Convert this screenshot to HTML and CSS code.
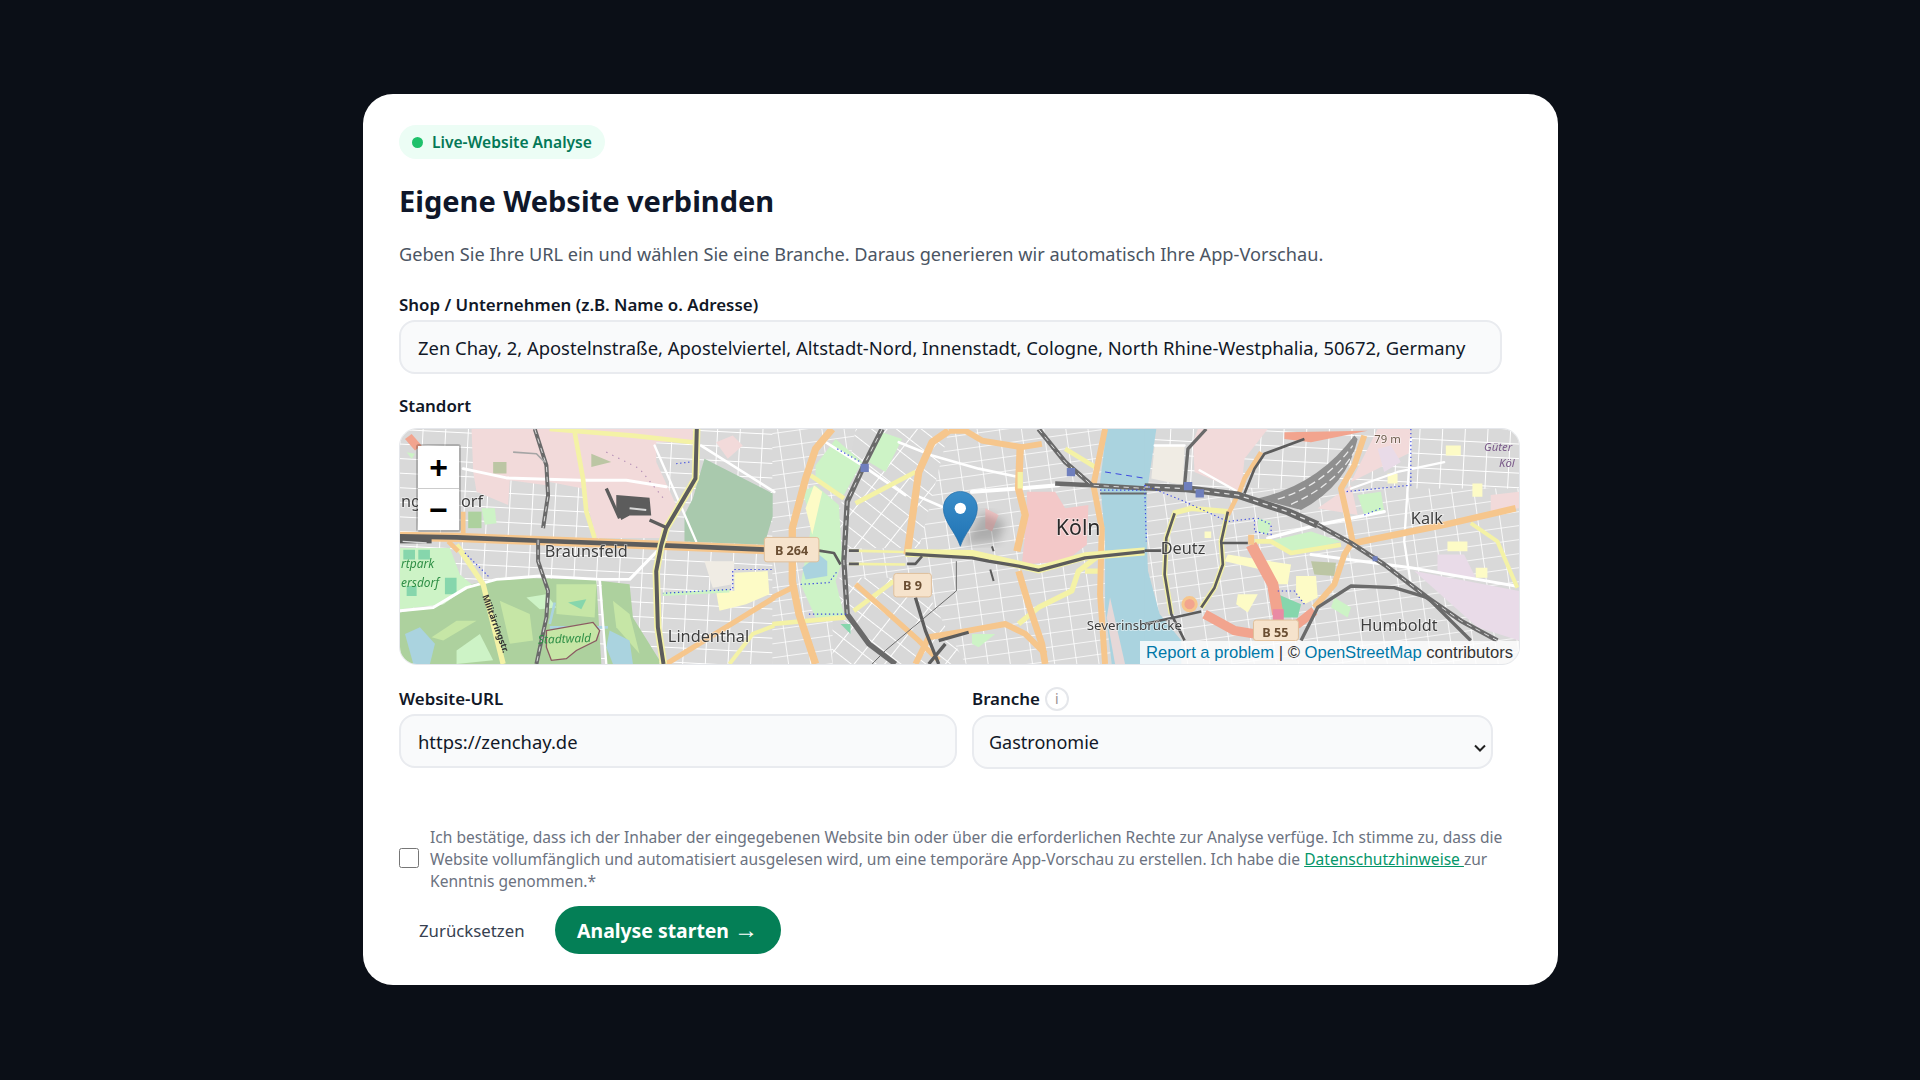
FILE: index.html
```html
<!DOCTYPE html>
<html lang="de">
<head>
  <meta charset="UTF-8" />
  <meta name="viewport" content="width=device-width, initial-scale=1.0" />
  <title>Eigene Website verbinden</title>
  <link rel="stylesheet" href="styles.css">
</head>
<body>
  <div class="card">
    <div class="badge"><span class="dot"></span>Live-Website Analyse</div>
    <h1>Eigene Website verbinden</h1>
    <p class="intro">Geben Sie Ihre URL ein und wählen Sie eine Branche. Daraus generieren wir automatisch Ihre App-Vorschau.</p>

    <label class="label">Shop / Unternehmen (z.B. Name o. Adresse)</label>
    <input class="field field-shop" type="text" value="Zen Chay, 2, Apostelnstraße, Apostelviertel, Altstadt-Nord, Innenstadt, Cologne, North Rhine-Westphalia, 50672, Germany" />

    <label class="label label-map">Standort</label>
    <div class="map">
      <!-- map is drawn at 3x, 3363 x 711 units -->
      <svg class="map-svg" viewBox="0 0 3363 711" preserveAspectRatio="none">
        <defs>
          <pattern id="grid-a" width="68" height="44" patternUnits="userSpaceOnUse" patternTransform="rotate(3)">
            <rect width="68" height="44" fill="#d9d9d9" />
            <path d="M0 0H68M0 0V44" stroke="#fff" stroke-width="6" />
          </pattern>
          <pattern id="grid-b" width="72" height="46" patternUnits="userSpaceOnUse" patternTransform="rotate(38)">
            <rect width="72" height="46" fill="#d8d8d8" />
            <path d="M0 0H72M0 0V46" stroke="#fff" stroke-width="6" />
          </pattern>
          <pattern id="grid-c" width="66" height="42" patternUnits="userSpaceOnUse" patternTransform="rotate(-8)">
            <rect width="66" height="42" fill="#d9d9d9" />
            <path d="M0 0H66M0 0V42" stroke="#fff" stroke-width="5" />
          </pattern>
          <linearGradient id="pin-fill" x1="0" y1="0" x2="0" y2="1">
            <stop offset="0" stop-color="#3a8dc9" />
            <stop offset="1" stop-color="#1f72b3" />
          </linearGradient>
          <filter id="pin-blur"><feGaussianBlur stdDeviation="14" /></filter>
        </defs>

        <rect width="3363" height="711" fill="url(#grid-a)" />
        <rect x="1119" width="1119" height="711" fill="url(#grid-c)" />
        <path d="M1370 0H1650L1560 360H1300Z" fill="url(#grid-b)" />
        <path d="M1300 450H1560L1700 711H1300Z" fill="url(#grid-b)" />
        <rect x="2238" y="180" width="1125" height="531" fill="url(#grid-c)" />

        <!-- left part -->
        <g>
          <path class="pink" d="M215 0H880V40H770V100L830 230L780 330H590L550 180L450 160L440 170L330 155L325 230L230 190L220 130Z" />
          <path class="pink" d="M950 40L1000 20L1030 50L985 90Z" />
          <path class="cemetery" d="M915 90L1120 195V265L1095 350L855 340V260L880 210Z" />
          <path class="forest" d="M0 555L130 530L215 470L300 450L590 455L605 711H0Z" />
          <path class="forest" d="M605 460L690 470L700 570L780 700V711H620Z" />
          <path class="meadow" d="M95 630L170 580L230 580L130 640Z" />
          <path class="meadow" d="M300 520L390 560L400 640L330 650Z" />
          <path class="meadow" d="M470 470L590 470L585 570L470 560Z" />
          <path class="meadow" d="M640 520L690 560L720 680L650 600Z" />
          <path class="park" d="M380 510L440 500L470 540L420 545Z" />
          <path class="park" d="M170 670L240 620L280 700L170 711Z" />
          <path class="park" d="M0 360H150L180 440L215 470L130 530L0 545Z" />
          <path class="teal" d="M10 365H45V395H10ZM55 365H90V395H55ZM20 475H50V505H20ZM135 450H170V500H135ZM505 525L560 515L545 545Z" />
          <path class="water" d="M15 620L60 600L105 650L90 711H40Z" />
          <path class="water" d="M630 610L690 640L700 711H640L620 660Z" />
          <path class="river-thin" d="M450 590L465 525M450 600H625" />
          <path class="ring-wood" d="M440 610L580 585L600 610L590 640L530 670L500 695L455 700L440 660Z" />
          <path class="park" d="M245 240H285L290 285L255 290Z" />
          <path class="forest" d="M205 250H245V300H205Z" />
          <path class="olive" d="M280 100H320V135H280ZM575 75L635 100L575 115Z" />
          <path class="salmon-fill" d="M15 30L35 15L65 50L45 65Z" />
          <path class="park" d="M20 70L45 75L35 90Z" />
          <path class="beige" d="M915 400H1005L1000 470L940 480Z" />
          <path class="sand" d="M1005 435L1105 430L1110 500L1040 530L1005 510Z" />
          <path class="sand" d="M950 490H1010L1040 530L960 550Z" />
          <path class="park" d="M790 495L990 485V495L790 505Z" />

          <path class="white" stroke-width="9" d="M190 120L320 148L540 155L680 155L800 175" />
          <path class="white" stroke-width="9" d="M0 550L100 540L200 480L290 455L420 445L600 455L690 455L780 362" />
          <path class="white" stroke-width="7" d="M600 455L620 711M765 50L800 130L890 340" />
          <path class="white" stroke-width="8" d="M905 50L1125 190" />

          <path class="yellow" stroke-width="14" d="M525 10L550 150L560 250L585 330M450 0L700 20L880 40" />
          <path class="yellow" stroke-width="16" d="M170 350L250 470L310 711" />
          <path class="yellow" stroke-width="12" d="M990 711L1060 620L1125 595" />
          <path class="orange" stroke-width="14" d="M190 250V330M145 340L175 370" />
          <path class="orange" stroke-width="16" d="M800 711L1125 510" />

          <path class="orange" stroke-width="28" d="M0 325L170 328L420 338L790 352L1100 365" />
          <path class="dark" stroke-width="14" d="M0 325L170 328L420 338L790 352L1100 365" />
          <path class="dark" stroke-width="20" d="M0 336H95" />
          <path class="dark-white" stroke-width="4" d="M8 340L80 345" />
          <path class="yellow" stroke-width="22" d="M892 0L888 150L800 300L785 352L770 430L775 600L792 711" />
          <path class="dark" stroke-width="12" d="M892 0L888 150L800 300L785 352L770 430L775 600L792 711" />

          <path class="rail" stroke-width="12" d="M405 0L440 110L445 200L430 300M415 335V400L445 490L440 570L410 711" />
          <path class="rail-dash" stroke-width="3" d="M405 0L440 110L445 200L430 300M415 335V400L445 490L440 570L410 711" />
          <path class="rail-light" stroke-width="5" d="M340 70L410 75L435 100" />
          <path class="dark" stroke-width="10" d="M620 180L660 270M750 275L800 298" />
          <path class="dark-fill" d="M650 200L750 208L755 262L690 262L665 275L650 240Z" />
          <path class="dark-white" stroke-width="6" d="M690 240L740 245" />

          <path class="dots" d="M195 375L270 450M830 105L870 100M1005 425H1125M1000 430V485L790 497" />
          <path class="dots-purple" d="M620 70L720 120L800 220" />
        </g>

        <!-- middle part -->
        <g transform="translate(1119 0)">
          <path class="park" d="M130 110L190 30L270 100L215 200L130 150Z" />
          <path class="park" d="M330 10L390 30L340 130L290 100Z" />
          <path class="park" d="M90 190L130 170L200 230L210 400L190 460L210 540L220 570H130L85 470L120 280Z" />
          <path class="sand" d="M100 240L125 170L150 190L120 320Z" />
          <path class="pink-city" d="M765 190H850L880 240L950 230L945 350L880 400L750 410L765 260Z" />
          <path class="pink-city" d="M640 240L680 260L660 310L640 300Z" />
          <path class="teal" d="M205 590H235V620Z" />
          <path class="park" d="M600 620H670L620 660L600 650Z" />
          <path class="water" d="M90 420L140 380L165 400V445L100 455Z" />
          <path class="water" d="M1005 0L985 160L1000 330V540L1020 711H1125V0Z" />
          <path class="bank" d="M1015 510L1060 711H1030L1005 570Z" />

          <path class="white" stroke-width="12" d="M600 190L740 180L860 170" />
          <path class="white" stroke-width="8" d="M430 200L510 235M380 40L480 80L620 120L740 145M160 40L270 110L400 200" />

          <path class="yellow" stroke-width="14" d="M115 140L215 210M250 225L430 130M245 550L365 460M0 590L220 570M880 60L970 115" />
          <path class="yellow" stroke-width="16" d="M740 590L800 540L900 490L920 430L985 380M940 430H980" />
          <path class="yellow" stroke-width="8" d="M230 368L400 372M230 408L400 410" />

          <path class="orange" stroke-width="22" d="M180 0L130 60L100 150L60 300V460L80 560L130 711" />
          <path class="orange" stroke-width="16" d="M0 510L60 480M250 470L340 550L440 640L500 700" />
          <path class="orange" stroke-width="22" d="M530 5L480 40L440 130L405 380M745 55L740 180L760 260L735 370" />
          <path class="orange" stroke-width="18" d="M530 5H580L630 35L750 55L810 45M470 630L590 610L700 590L760 620L820 680M430 711L470 630" />
          <path class="orange" stroke-width="20" d="M740 430L770 530L810 650L820 711" />
          <path class="orange" stroke-width="18" d="M1000 0L965 170L990 300L985 500L1000 711" />
          <path class="yellow" stroke-width="16" d="M745 130V180" />

          <path class="yellow" stroke-width="24" d="M400 375L600 378L740 410L800 425L940 385L1125 370" />
          <path class="dark" stroke-width="10" d="M400 378L600 390L650 400L740 415L800 428L940 390L1125 370" />
          <path class="dark" stroke-width="8" d="M140 368L185 375L205 410M230 368H260M230 408H260M405 408H430L450 385" />

          <path class="rail" stroke-width="16" d="M330 0L280 100L225 220L215 400L225 560L290 650L370 711" />
          <path class="rail-dash" stroke-width="3" d="M330 0L280 100L225 220L215 400L225 560" />
          <path class="dark" stroke-width="10" d="M430 510L460 610L500 711M500 640L590 615M470 711L520 650" />
          <path class="rail-thin" d="M553 400V490L340 670L300 711" />
          <path class="dark" stroke-width="6" d="M660 355L665 370M655 425L665 460" />
          <path class="rail" stroke-width="14" d="M800 0L880 100L960 170L1125 180M850 165L960 170" />
          <path class="rail-dash" stroke-width="3" d="M800 0L880 100L960 170L1125 180" />
          <path class="rail" stroke-width="6" d="M985 195H1125" />

          <path class="dots" d="M985 185H1125M195 60L265 100M85 470L170 465L195 430M110 560H225" />
          <path class="dash" d="M1000 130L1125 150" />

          <path class="station" d="M265 105H290V130H265ZM885 118H910V143H885Z" />

          <rect class="shield" x="-24" y="328" width="164" height="74" rx="8" />
          <rect class="shield" x="365" y="437" width="113" height="71" rx="8" />
        </g>

        <!-- right part -->
        <g transform="translate(2238 0)">
          <path class="water" d="M0 0H35L10 170L0 195L10 430L45 560L110 640V711H0Z" />
          <path class="beige" d="M30 50H120L115 170L20 150Z" />
          <path class="pink" d="M145 40L160 0H370L300 90L290 190L150 130Z" />
          <path class="pink" d="M650 100L700 0H800V70L620 160Z" />
          <path class="pink" d="M520 240L620 170L640 260Z" />
          <path class="pink" d="M1040 200L1125 190V240L1040 250Z" />
          <path class="lilac" d="M700 60L740 50L770 100L720 130Z" />
          <path class="lilac" d="M810 430L1125 490V640L1000 600Z" />
          <path class="lilac" d="M880 380H960L1000 460L880 430Z" />
          <path class="park" d="M370 340L500 310L590 340L440 380Z" />
          <path class="park" d="M640 200L710 190L720 250L660 260Z" />
          <path class="park" d="M340 270L380 280L370 320L340 310Z" />
          <path class="park" d="M570 510L620 540L610 570L560 540Z" />
          <path class="teal" d="M400 500L470 530L460 570L410 570Z" />
          <path class="olive" d="M500 400L575 405L570 445L510 440Z" />
          <path class="sand" d="M250 380L440 410L430 470H390L370 430L240 400Z" />
          <path class="sand" d="M455 445H515L520 510L480 530L455 500Z" />
          <path class="sand" d="M280 500H340L310 555L275 530Z" />
          <path class="sand" d="M905 50H950V80H905ZM985 165H1015V205H985ZM910 340H970V370H910ZM730 135H760V165H730ZM995 420H1030V450H995ZM180 310H200V330H180Z" />

          <path class="white" stroke-width="10" d="M370 330L520 290L720 250" />
          <path class="white" stroke-width="9" d="M500 380L800 420L1000 455L1115 475" />
          <path class="white" stroke-width="7" d="M800 30L780 340L800 470M620 180L760 130L900 100M30 50L120 50M165 125L280 190" />

          <path class="yellow" stroke-width="12" d="M980 285L1060 340L1120 480" />
          <path class="yellow" stroke-width="14" d="M330 340H380L440 375L590 350" />
          <path class="yellow" stroke-width="16" d="M85 255L140 240L250 250M90 255L65 330L60 440L80 560M250 250L230 340L235 410L210 480L170 540" />

          <path class="salmon" stroke-width="34" d="M320 350L385 470L400 560" />
          <path class="salmon" stroke-width="28" d="M180 560L270 610L330 620L460 590L510 550" />
          <path class="salmon-fill" d="M420 10L670 5L500 40L420 30Z" />
          <path class="rose" d="M385 545H418V578H385Z" />
          <circle class="ring" cx="135" cy="530" r="20" />

          <path class="orange" stroke-width="18" d="M660 20L630 110L590 180L610 270L625 340L600 380L570 470L510 540" />
          <path class="orange" stroke-width="20" d="M630 345L900 290L1115 240" />
          <path class="orange" stroke-width="14" d="M350 70L300 150L285 190L250 260" />
          <path class="orange" stroke-width="18" d="M320 320V350" />

          <path class="dark" stroke-width="8" d="M480 30L360 75L330 120L300 195" />
          <path class="dark" stroke-width="8" d="M250 250L230 340L235 410L210 480L170 540" />
          <path class="dark" stroke-width="8" d="M90 255L65 330L60 440L80 560L120 640" />
          <path class="dark" stroke-width="8" d="M0 368H50M230 345H310M0 590L170 552" />

          <path class="rail-yard" d="M340 210Q520 170 630 20L640 30Q610 170 470 245Z" />
          <path class="rail-dash-wide" d="M400 212Q540 170 625 50M440 228Q570 170 630 70" />
          <path class="rail" stroke-width="10" d="M185 0L130 60L120 170" />
          <path class="rail" stroke-width="22" d="M0 175L120 180L280 200L430 250L520 290" />
          <path class="rail-dash" stroke-width="4" d="M0 175L120 180L280 200L430 250L520 290" />
          <path class="rail" stroke-width="14" d="M520 290L620 345L720 410L850 510L950 580L1060 640" />
          <path class="rail-dash" stroke-width="3" d="M520 290L620 345L720 410L850 510L950 580L1060 640" />
          <path class="rail" stroke-width="10" d="M470 640L520 540L620 475L750 480L850 510L980 640" />

          <path class="dots" d="M0 170L110 215L250 280L330 270V310L380 320V290L340 270M800 0V170L600 190M660 260L710 240M0 170L5 340M400 490H450L480 530" />
          <path class="station" d="M118 160H143V185H118ZM153 182H178V207H153ZM685 385H700V400H685Z" />

          <rect class="shield" x="327" y="578" width="135" height="62" rx="8" />
        </g>

        <!-- labels -->
        <g class="shield-text">
          <text x="1177" y="380">B 264</text>
          <text x="1540" y="488">B 9</text>
          <text x="2631" y="628">B 55</text>
        </g>
        <g class="place">
          <text x="3" y="236">ng</text>
          <text x="183" y="236">orf</text>
          <text x="435" y="388">Braunsfeld</text>
          <text x="805" y="645">Lindenthal</text>
          <text class="place-big" x="1971" y="322">Köln</text>
          <text x="2286" y="378">Deutz</text>
          <text x="3038" y="288">Kalk</text>
          <text x="2886" y="610">Humboldt</text>
          <text class="place-small" x="2064" y="608">Severinsbrücke</text>
          <text class="place-height" x="2928" y="42">79 m</text>
        </g>
        <g class="place-green">
          <text x="3" y="420">rtpark</text>
          <text x="3" y="478">ersdorf</text>
          <text x="415" y="650" transform="rotate(-2 415 650)">Stadtwald</text>
        </g>
        <text class="road-name" x="247" y="505" transform="rotate(70 247 505)">Militärringstr.</text>
        <g class="place-purple">
          <text x="3258" y="68">Güter</text>
          <text x="3303" y="115">Köl</text>
        </g>

        <!-- marker -->
        <g transform="translate(1119 0)">
          <path class="pin-shadow" d="M575 350L630 250L700 280L680 340Z" filter="url(#pin-blur)" />
          <path class="pin" d="M565 355C550 310 514 280 514 240A51 51 0 1 1 616 240C616 280 580 310 565 355Z" fill="url(#pin-fill)" />
          <circle cx="565" cy="240" r="17" fill="#fff" />
        </g>
      </svg>

      <div class="zoom-control">
        <div class="zoom-btn">+</div>
        <div class="zoom-btn">−</div>
      </div>
      <div class="attribution"><a href="#">Report a problem</a> | © <a href="#">OpenStreetMap</a> contributors</div>
    </div>

    <div class="row">
      <div class="col col-url">
        <label class="label">Website-URL</label>
        <input class="field" type="text" value="https://zenchay.de" />
      </div>
      <div class="col col-branch">
        <div class="label-line">
          <label class="label">Branche</label>
          <span class="info">i</span>
        </div>
        <div class="select-wrap">
          <select class="field field-select">
            <option>Gastronomie</option>
          </select>
          <svg class="chevron" width="12" height="8" viewBox="0 0 12 8">
            <path d="M1 1.5L6 6.5L11 1.5" fill="none" stroke="#222" stroke-width="2" />
          </svg>
        </div>
      </div>
    </div>

    <div class="consent">
      <input class="check" type="checkbox" />
      <p>Ich bestätige, dass ich der Inhaber der eingegebenen Website bin oder über die erforderlichen Rechte zur Analyse verfüge. Ich stimme zu, dass die Website vollumfänglich und automatisiert ausgelesen wird, um eine temporäre App-Vorschau zu erstellen. Ich habe die <a href="#">Datenschutzhinweise </a>zur Kenntnis genommen.*</p>
    </div>

    <div class="actions">
      <button class="btn-reset">Zurücksetzen</button>
      <button class="btn-start">Analyse starten <span class="arrow">→</span></button>
    </div>
  </div>
</body>
</html>
```

FILE: styles.css
```css
* {
  box-sizing: border-box;
  margin: 0;
  padding: 0;
  font-family: "Noto Sans", "Open Sans", sans-serif;
}

body {
  min-height: 100vh;
  padding: 0 0 1px 1px;
  background: #0b0f17;
  display: flex;
  justify-content: center;
  align-items: center;
}

.card {
  width: 1195px;
  height: 891px;
  background: #fff;
  border-radius: 30px;
  padding: 31px 38px 0 36px;
}

.badge {
  display: inline-flex;
  align-items: center;
  height: 34px;
  padding: 0 13px;
  gap: 9px;
  background: #ecfdf5;
  border-radius: 17px;
  color: #047857;
  font-size: 15.6px;
  font-weight: 600;
}

.dot {
  width: 11px;
  height: 11px;
  border-radius: 50%;
  background: #1fc16b;
}

h1 {
  margin-top: 22px;
  font-size: 29px;
  line-height: 40px;
  font-weight: 700;
  color: #0f172a;
}

.intro {
  margin-top: 20px;
  font-size: 18.16px;
  line-height: 26px;
  color: #4b5563;
}

.label {
  display: block;
  font-size: 16.9px;
  line-height: 22px;
  font-weight: 600;
  color: #111827;
}

.intro + .label {
  margin-top: 27px;
}

.field {
  display: block;
  height: 54px;
  width: 100%;
  margin-top: 4px;
  padding: 0 17px;
  background: #f9fafb;
  border: 2px solid #e9ebef;
  border-radius: 16px;
  font-size: 18.4px;
  color: #111827;
  outline: none;
}

.field-shop {
  width: 1103px;
}

.field-select {
  appearance: none;
  margin-top: 5px;
  padding: 0 30px 0 15px;
  font-size: 18px;
}

.select-wrap {
  position: relative;
}

.chevron {
  position: absolute;
  top: 29px;
  right: 7px;
}

.label-line {
  display: flex;
  align-items: center;
  gap: 5px;
  height: 22px;
}

.label-map {
  margin-top: 21px;
}

.map {
  position: relative;
  height: 237px;
  margin-top: 11px;
  border: 1px solid #e5e7eb;
  border-radius: 18px;
  overflow: hidden;
}

.map-svg {
  display: block;
  width: 100%;
  height: 100%;
  filter: blur(0.55px);
}

.zoom-control {
  position: absolute;
  top: 15px;
  left: 16px;
  width: 45px;
  border: 2px solid rgba(0, 0, 0, 0.2);
  border-radius: 3px;
  background-clip: padding-box;
}

.zoom-btn {
  height: 42px;
  background: #fff;
  color: #000;
  font-family: "Liberation Sans", sans-serif;
  font-size: 32px;
  font-weight: 700;
  line-height: 42px;
  text-align: center;
}

.zoom-btn + .zoom-btn {
  border-top: 1px solid #ccc;
}

.attribution {
  position: absolute;
  right: 0;
  bottom: 0;
  height: 23px;
  padding: 0 6px;
  background: rgba(255, 255, 255, 0.8);
  font-family: "Liberation Sans", sans-serif;
  font-size: 16.6px;
  line-height: 23px;
  color: #333;
  white-space: nowrap;
}

.attribution a {
  font-family: "Liberation Sans", sans-serif;
  color: #0078a8;
  text-decoration: none;
}

.row {
  display: flex;
  gap: 15px;
  margin-top: 23px;
}

.col-url {
  width: 558px;
}

.col-branch {
  width: 521px;
}

.info {
  display: block;
  flex: none;
  width: 24px;
  height: 24px;
  border: 2px solid #e5e7eb;
  border-radius: 50%;
  font-size: 14px;
  font-weight: 400;
  line-height: 20px;
  text-align: center;
  color: #9a8f93;
}

.consent {
  display: flex;
  align-items: center;
  gap: 11px;
  margin-top: 57px;
}

.check {
  flex: none;
  width: 20px;
  height: 20px;
  margin-bottom: 2px;
}

.consent p {
  font-size: 15.57px;
  line-height: 22px;
  color: #6b7280;
}

.consent a {
  color: #059669;
}

.actions {
  display: flex;
  align-items: center;
  gap: 30px;
  margin-top: 14px;
  padding-left: 20px;
}

button {
  border: none;
  background: none;
  cursor: pointer;
}

.btn-reset {
  font-size: 16.8px;
  color: #374151;
}

.btn-start {
  width: 226px;
  height: 48px;
  border-radius: 24px;
  background: #047f56;
  color: #fff;
  font-size: 19.4px;
  font-weight: 700;
}

.arrow {
  font-family: "Liberation Sans", sans-serif;
  font-size: 24px;
  line-height: 20px;
}

/* map layers */
.pink { fill: #f2dada; }
.pink-city { fill: #f3c8c8; }
.lilac { fill: #e9dbe8; }
.cemetery { fill: #a9c9ad; }
.forest { fill: #add19e; }
.meadow { fill: #c6e6a6; }
.park { fill: #cdf3c6; }
.teal { fill: #86d6ac; }
.olive { fill: #bcc6a4; }
.beige { fill: #f0ece4; }
.sand { fill: #fdfbc6; }
.water { fill: #aad3df; }
.bank { fill: #e6d8d8; }
.salmon-fill { fill: #f2a48e; }
.rose { fill: #e98aa4; }
.station { fill: #6f7fbd; }
.rail-yard { fill: #8f8f8f; }
.dark-fill { fill: #5c5c5c; }
.ring-wood { fill: #c6e6a6; stroke: #8b5a62; stroke-width: 4; }
.ring { fill: #f2a48e; stroke: #f6c68c; stroke-width: 9; }

.white, .yellow, .orange, .salmon, .dark, .dark-white, .rail, .rail-dash, .rail-light,
.rail-thin, .rail-dash-wide, .river-thin, .dots, .dots-purple, .dash {
  fill: none;
  stroke-linejoin: round;
}

.white { stroke: #fff; stroke-linecap: round; }
.yellow { stroke: #f4f2a6; }
.orange { stroke: #f6c68c; }
.salmon { stroke: #f2a48e; }
.dark { stroke: #5c5c5c; }
.dark-white { stroke: #d8d8d8; }
.rail { stroke: #6a6a6a; }
.rail-dash { stroke: #ddd; stroke-dasharray: 16 14; }
.rail-dash-wide { stroke: #e8e8e8; stroke-width: 4; stroke-dasharray: 22 12; }
.rail-light { stroke: #a5a5a5; }
.rail-thin { stroke: #6a6a6a; stroke-width: 3; }
.river-thin { stroke: #aad3df; stroke-width: 8; }
.dots { stroke: #3b49e0; stroke-width: 3.5; stroke-dasharray: 4 8; }
.dots-purple { stroke: #b28cb4; stroke-width: 3.5; stroke-dasharray: 4 16; }
.dash { stroke: #3b49e0; stroke-width: 3; stroke-dasharray: 18 14; }

.shield { fill: #f6e3cc; stroke: #e0c09a; stroke-width: 3; }
.shield-text text {
  font-size: 38px;
  font-weight: 700;
  fill: #6b4f33;
  text-anchor: middle;
}

.place text {
  font-size: 49px;
  fill: #3d3d3d;
  stroke: #fff;
  stroke-width: 5;
  stroke-opacity: 0.55;
  paint-order: stroke;
}

.place .place-big {
  font-size: 64px;
  fill: #2a2a2a;
}

.place .place-small {
  font-size: 40px;
}

.place .place-height {
  font-size: 34px;
  fill: #6b5a4a;
}

.place-green text {
  font-size: 36px;
  font-style: italic;
  fill: #2f8f46;
}

.road-name {
  font-size: 27px;
  font-weight: 700;
  fill: #333;
}

.place-purple text {
  font-size: 34px;
  font-style: italic;
  fill: #7a5a8a;
}

.pin { stroke: #1f6ba5; stroke-width: 2; }
.pin-shadow { fill: #000; opacity: 0.2; }
```
